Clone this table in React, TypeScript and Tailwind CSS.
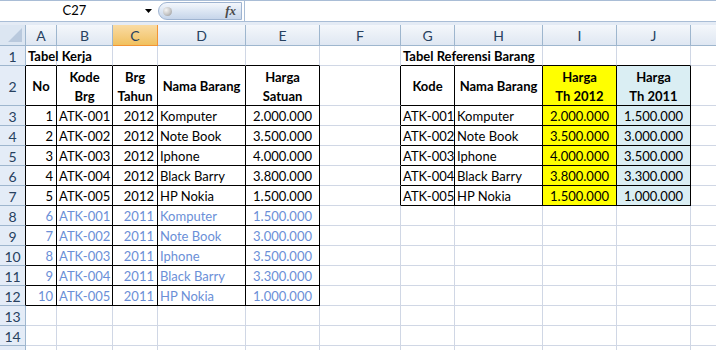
import type { ReactNode } from 'react'

type Align = 'left' | 'right' | 'center'

interface Cell {
  text: ReactNode
  align?: Align
  bold?: boolean
  blue?: boolean
  fill?: 'yellow' | 'aqua'
  price?: boolean
}

const COLS = ['A', 'B', 'C', 'D', 'E', 'F', 'G', 'H', 'I', 'J', 'K']
const ROWS = [1, 2, 3, 4, 5, 6, 7, 8, 9, 10, 11, 12, 13, 14, 15]

const items = [
  { code: 'ATK-001', name: 'Komputer', p2012: '2.000.000', p2011: '1.500.000' },
  { code: 'ATK-002', name: 'Note Book', p2012: '3.500.000', p2011: '3.000.000' },
  { code: 'ATK-003', name: 'Iphone', p2012: '4.000.000', p2011: '3.500.000' },
  { code: 'ATK-004', name: 'Black Barry', p2012: '3.800.000', p2011: '3.300.000' },
  { code: 'ATK-005', name: 'HP Nokia', p2012: '1.500.000', p2011: '1.000.000' },
]

// sheet contents keyed by "col+row"
const sheet: Record<string, Cell> = {}

sheet['A1'] = { text: 'Tabel Kerja', bold: true }
sheet['G1'] = { text: 'Tabel Referensi Barang', bold: true }

const twoLines = (a: string, b: string) => (
  <>
    {a}
    <br />
    {b}
  </>
)

sheet['A2'] = { text: 'No', bold: true, align: 'center' }
sheet['B2'] = { text: twoLines('Kode', 'Brg'), bold: true, align: 'center' }
sheet['C2'] = { text: twoLines('Brg', 'Tahun'), bold: true, align: 'center' }
sheet['D2'] = { text: 'Nama Barang', bold: true, align: 'center' }
sheet['E2'] = { text: twoLines('Harga', 'Satuan'), bold: true, align: 'center' }

items.forEach((it, i) => {
  const r = 3 + i
  sheet[`A${r}`] = { text: String(i + 1), align: 'right' }
  sheet[`B${r}`] = { text: it.code }
  sheet[`C${r}`] = { text: '2012', align: 'right' }
  sheet[`D${r}`] = { text: it.name }
  sheet[`E${r}`] = { text: it.p2012, align: 'right', price: true }

  const r2 = 8 + i
  sheet[`A${r2}`] = { text: String(i + 6), align: 'right', blue: true }
  sheet[`B${r2}`] = { text: it.code, blue: true }
  sheet[`C${r2}`] = { text: '2011', align: 'right', blue: true }
  sheet[`D${r2}`] = { text: it.name, blue: true }
  sheet[`E${r2}`] = { text: it.p2011, align: 'right', price: true, blue: true }

  sheet[`G${r}`] = { text: it.code }
  sheet[`H${r}`] = { text: it.name }
  sheet[`I${r}`] = { text: it.p2012, align: 'right', price: true, fill: 'yellow' }
  sheet[`J${r}`] = { text: it.p2011, align: 'right', price: true, fill: 'aqua' }
})

sheet['G2'] = { text: 'Kode', bold: true, align: 'center' }
sheet['H2'] = { text: 'Nama Barang', bold: true, align: 'center' }
sheet['I2'] = { text: twoLines('Harga', 'Th 2012'), bold: true, align: 'center', fill: 'yellow' }
sheet['J2'] = { text: twoLines('Harga', 'Th 2011'), bold: true, align: 'center', fill: 'aqua' }

// bordered ranges
const inTable = (c: number, r: number) =>
  (c >= 0 && c <= 4 && r >= 2 && r <= 12) || (c >= 6 && c <= 9 && r >= 2 && r <= 7)

const SelectAll = () => (
  <div className="relative h-[21px] border-r border-b border-[#9eb6ce] bg-[#dce6f2]">
    <svg className="absolute right-[3px] bottom-[3px]" width="14" height="14" viewBox="0 0 14 14">
      <path d="M14 0 L14 14 L0 14 Z" fill="#b9c9dd" />
    </svg>
  </div>
)

const FormulaBar = () => (
  <div className="flex h-[22px] border-t border-b border-[#a9bdd6] bg-white">
    <div className="flex w-[158px] items-center">
      <span className="flex-1 pl-[4px] text-center">C27</span>
      <svg className="mr-[6px]" width="7" height="4" viewBox="0 0 7 4">
        <path d="M0 0 H7 L3.5 4 Z" fill="#000" />
      </svg>
    </div>
    <div className="my-[1px] flex w-[84px] items-center justify-between rounded-l-full border border-[#9fb4d1] bg-linear-to-b from-[#f4f7fc] via-[#dce6f3] to-[#c6d5ea] pr-[5px] pl-[4px]">
      <span className="h-[9px] w-[9px] rounded-full bg-radial-[at_35%_35%] from-[#f4f4f4] via-[#c9c9c9] to-[#8e8e8e]" />
      <span className="font-['Liberation_Serif',serif] text-[13px] font-bold text-[#4a4a4a] italic">fx</span>
    </div>
    <div className="ml-[2px] flex-1 border-l border-[#a9bdd6]" />
  </div>
)

export default function App() {
  const rowH = (r: number) => (r === 2 ? 'h-[40px]' : 'h-[20px]')

  return (
    <div className="h-[350px] w-[716px] overflow-hidden bg-white font-['Lato',sans-serif] text-[13px] text-black">
      <FormulaBar />
      <div className="h-[3px] bg-[#e4ebf5]" />

      <div className="grid w-max grid-cols-[26px_31px_56px_45px_88px_74px_81px_54px_88px_74px_74px_64px]">
        {/* column headers; K sits past the window edge so its letter stays hidden */}
        <SelectAll />
        {COLS.map((c) =>
          c === 'C' ? (
            <div
              key={c}
              className="flex h-[21px] items-center justify-center border-r border-b border-[#f29436] bg-linear-to-b from-[#f9dba3] to-[#f1c15e] text-[14px] text-[#27415f]"
            >
              {c}
            </div>
          ) : (
            <div
              key={c}
              className="flex h-[21px] items-center justify-center border-r border-b border-[#9eb6ce] bg-linear-to-b from-[#f4f7fb] to-[#dfe7f2] text-[14px] text-[#27415f]"
            >
              {c === 'K' ? '' : c}
            </div>
          ),
        )}

        {ROWS.map((r) => (
          <Row key={r} r={r} h={rowH(r)} />
        ))}
      </div>
    </div>
  )
}

const Row = ({ r, h }: { r: number; h: string }) => (
  <>
    <div
      className={`flex ${h} items-center justify-center border-b border-[#9eb6ce] bg-[#e4ecf7] pt-[2px] text-[14px] text-[#27415f] ${
        inTable(0, r) ? 'border-r border-r-black' : 'border-r border-r-[#9eb6ce]'
      }`}
    >
      {r < 15 ? r : ''}
    </div>
    {COLS.map((c, ci) => {
      const cell = sheet[`${c}${r}`]
      const right = inTable(ci, r) || inTable(ci + 1, r)
      const bottom = inTable(ci, r) || inTable(ci, r + 1)
      const fill =
        cell?.fill === 'yellow' ? 'bg-[#ffff00]' : cell?.fill === 'aqua' ? 'bg-[#daeef3]' : ''
      const align =
        cell?.align === 'right'
          ? 'justify-end text-right'
          : cell?.align === 'center'
            ? 'justify-center text-center'
            : 'justify-start'
      const pad = cell?.price ? 'pr-[7px] pl-[2px]' : cell?.align === 'right' ? 'px-[3px]' : 'px-[2px]'
      return (
        <div
          key={c}
          className={`flex ${h} items-center whitespace-nowrap border-r border-b pt-[2px] leading-[19px] ${pad} ${align} ${fill} ${
            right ? 'border-r-black' : 'border-r-[#d0d7e5]'
          } ${bottom ? 'border-b-black' : 'border-b-[#d0d7e5]'} ${cell?.bold ? 'font-bold' : ''} ${
            cell?.blue ? 'text-[#6b8fd7]' : ''
          } ${cell && !cell.align ? 'overflow-visible' : 'overflow-hidden'}`}
        >
          {cell?.text}
        </div>
      )
    })}
  </>
)
